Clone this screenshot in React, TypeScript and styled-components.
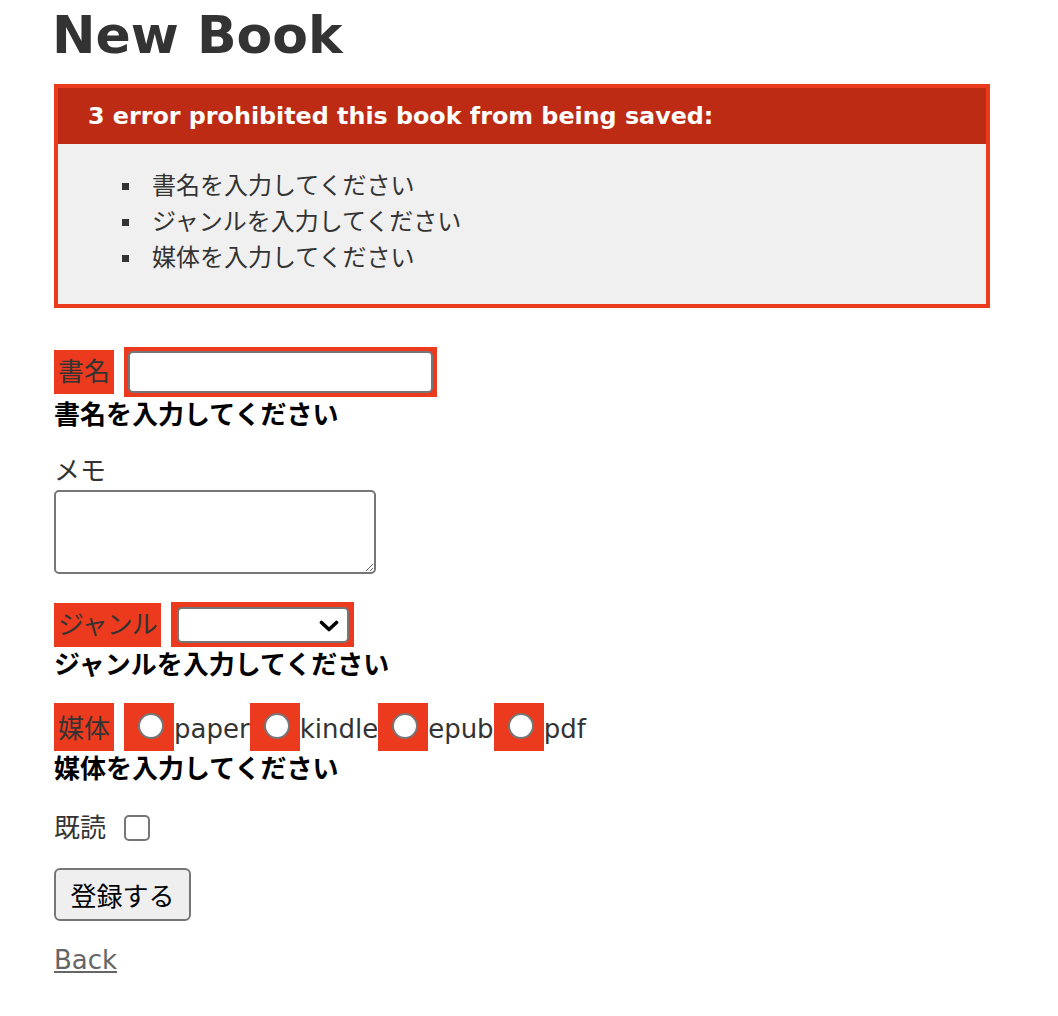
import React from "react";
import styled, { createGlobalStyle } from "styled-components";

const GlobalStyle = createGlobalStyle`
    body {
        margin: 0;
        background: #fff;
        color: #333;
        font-family: "DejaVu Sans", "Noto Sans CJK JP", sans-serif;
        font-size: 26px;
        line-height: 36px;
    }
`

const errorRed = "#ec3a1e";
const grey = "#767676";

const errors = ["書名を入力してください", "ジャンルを入力してください", "媒体を入力してください"];
const media = ["paper", "kindle", "epub", "pdf"];

export default function App() {
    return (
        <>
            <GlobalStyle />
            <Page>
                <Title>New Book</Title>

                <ErrorBox>
                    <ErrorHeader>3 error prohibited this book from being saved:</ErrorHeader>
                    <ErrorList>
                        {errors.map((e) => <li key={e}>{e}</li>)}
                    </ErrorList>
                </ErrorBox>

                <Field>
                    <Row>
                        <ErrorWrap><Label>書名</Label></ErrorWrap>
                        <ErrorWrap><TextInput type="text" /></ErrorWrap>
                    </Row>
                    <FieldError>書名を入力してください</FieldError>
                </Field>

                <Field gap={28}>
                    <BlockLabel>メモ</BlockLabel>
                    <TextArea />
                </Field>

                <Field>
                    <Row height={45}>
                        <ErrorWrap><Label tight>ジャンル</Label></ErrorWrap>
                        <SelectWrap>
                            <Select defaultValue="">
                                <option value=""></option>
                            </Select>
                            <Chevron width="20" height="12" viewBox="0 0 20 12">
                                <path d="M2.5 2.5 L10 9.5 L17.5 2.5" fill="none" stroke="#000" strokeWidth="3.6" strokeLinecap="round" strokeLinejoin="round" />
                            </Chevron>
                        </SelectWrap>
                    </Row>
                    <FieldError>ジャンルを入力してください</FieldError>
                </Field>

                <Field>
                    <MediaRow>
                        <MediaLabel><Label>媒体</Label></MediaLabel>
                        <Spacer />
                        {media.map((m) => (
                            <React.Fragment key={m}>
                                <RadioWrap><Radio type="radio" name="media" /></RadioWrap>
                                <OptionText>{m}</OptionText>
                            </React.Fragment>
                        ))}
                    </MediaRow>
                    <FieldError>媒体を入力してください</FieldError>
                </Field>

                <Field>
                    <Row height={42} gap={18}>
                        <Label as="label">既読</Label>
                        <Checkbox type="checkbox" />
                    </Row>
                </Field>

                <Field gap={21}>
                    <SubmitButton type="button">登録する</SubmitButton>
                </Field>

                <BackLink href="#">Back</BackLink>
            </Page>
        </>
    )
}

const Page = styled.div`
    padding: 0 0 40px 54px;
`

const Title = styled.h1`
    margin: 0 0 31px -2px;
    padding-top: 17px;
    font-size: 52px;
    line-height: 36px;
    font-weight: bold;
    color: #333;
`

const ErrorBox = styled.div`
    width: 936px;
    box-sizing: border-box;
    border: 4px solid ${errorRed};
    background: #f0f0f0;
    margin-bottom: 39px;
`

const ErrorHeader = styled.h2`
    margin: 0;
    padding: 10px 10px 10px 30px;
    font-size: 23.8px;
    line-height: 36px;
    font-weight: bold;
    background: #bd2b14;
    color: #fff;
`

const ErrorList = styled.ul`
    margin: 24px 0 28px;
    padding-left: 94px;
    list-style: none;

    li {
        position: relative;
        font-size: 24px;
        line-height: 36px;
        color: #333;
    }

    li::before {
        content: "";
        position: absolute;
        left: -30px;
        top: 15px;
        width: 7px;
        height: 7px;
        background: #333;
    }
`

const Field = styled.div<{ gap?: number }>`
    margin-bottom: ${(p) => p.gap ?? 20}px;
`

const Row = styled.div<{ height?: number; gap?: number }>`
    display: flex;
    align-items: center;
    gap: ${(p) => p.gap ?? 10}px;
    height: ${(p) => p.height ?? 50}px;
`

const MediaRow = styled.div`
    display: flex;
    align-items: stretch;
    height: 48px;
`

const Spacer = styled.span`
    width: 10px;
`

const ErrorWrap = styled.div`
    display: flex;
    align-items: center;
    padding: 4px;
    background: ${errorRed};
`

const MediaLabel = styled(ErrorWrap)`
    align-items: flex-start;
    padding: 8px 4px 0;
`

const Label = styled.span<{ tight?: boolean }>`
    display: block;
    line-height: 36px;
    color: #333;
    letter-spacing: ${(p) => (p.tight ? "-1px" : "0")};
`

const BlockLabel = styled.label`
    display: block;
    line-height: 36px;
`

const FieldError = styled.div`
    font-weight: bold;
    color: #000;
    line-height: 36px;
`

const TextInput = styled.input`
    box-sizing: border-box;
    width: 305px;
    height: 42px;
    margin: 0;
    padding: 2px 4px;
    border: 2px solid ${grey};
    border-radius: 5px;
    font: inherit;
    background: #fff;
`

const TextArea = styled.textarea`
    display: block;
    box-sizing: border-box;
    width: 322px;
    height: 84px;
    margin: 1px 0 0;
    padding: 4px;
    border: 2px solid ${grey};
    border-radius: 5px;
    font: inherit;
    background: #fff;
`

const SelectWrap = styled(ErrorWrap)`
    position: relative;
    padding: 5px 5px 4px 6px;
`

const Select = styled.select`
    appearance: none;
    box-sizing: border-box;
    width: 172px;
    height: 36px;
    margin: 0;
    border: 2px solid ${grey};
    border-radius: 5px;
    background: #fff;
    font: inherit;
`

const Chevron = styled.svg`
    position: absolute;
    right: 15px;
    top: 18px;
    pointer-events: none;
`

const RadioWrap = styled.div`
    box-sizing: border-box;
    display: flex;
    align-items: flex-start;
    height: 48px;
    padding: 10px 10px 0 14px;
    background: ${errorRed};
`

const Radio = styled.input`
    appearance: none;
    box-sizing: border-box;
    width: 26px;
    height: 26px;
    margin: 0;
    border: 2px solid ${grey};
    border-radius: 50%;
    background: #fff;
`

const OptionText = styled.span`
    padding-top: 8px;
    line-height: 36px;
    color: #333;
`

const Checkbox = styled.input`
    appearance: none;
    box-sizing: border-box;
    width: 26px;
    height: 26px;
    margin: 0;
    border: 2px solid ${grey};
    border-radius: 5px;
    background: #fff;
`

const SubmitButton = styled.button`
    box-sizing: border-box;
    width: 137px;
    height: 53px;
    margin-top: -1px;
    padding: 0;
    border: 2px solid ${grey};
    border-radius: 6px;
    background: #efefef;
    color: #000;
    font-family: "Noto Sans CJK JP", sans-serif;
    font-size: 26px;
`

const BackLink = styled.a`
    display: inline-block;
    line-height: 36px;
    color: #666;
    text-decoration: underline;
`
